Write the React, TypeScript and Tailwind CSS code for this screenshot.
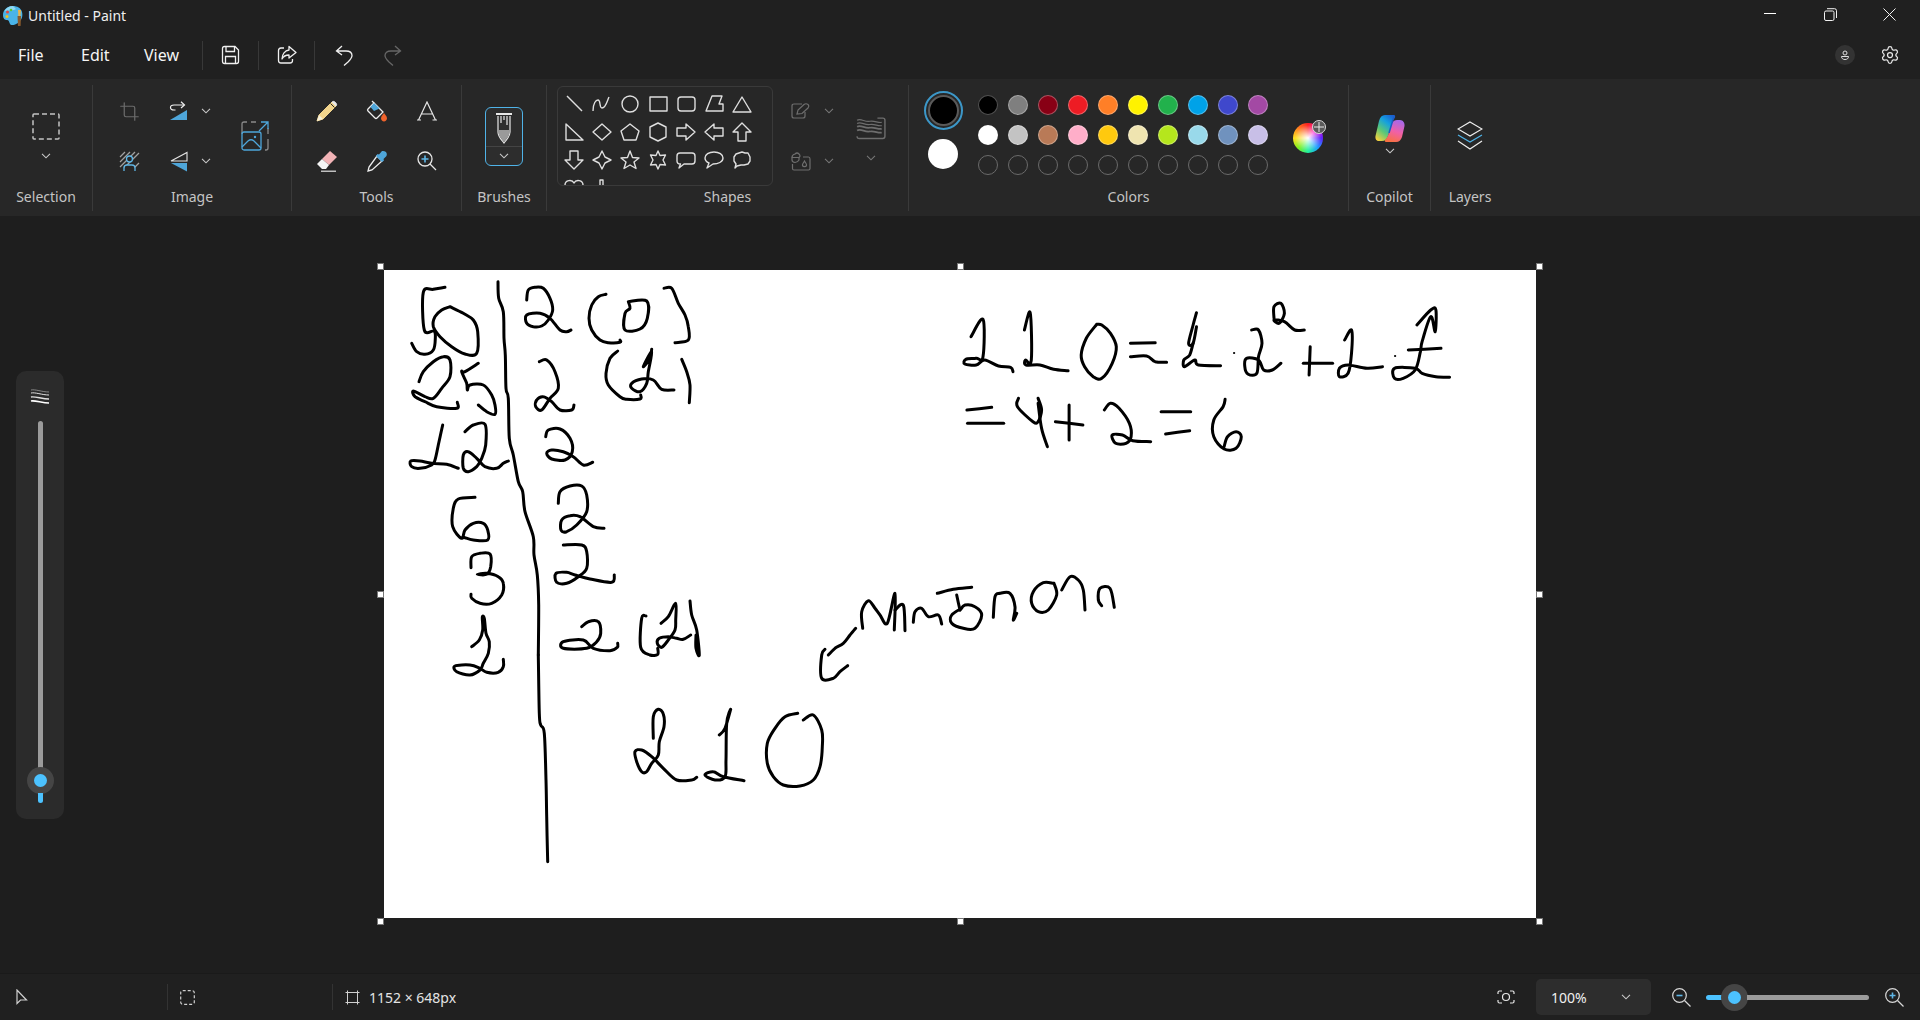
import React from 'react';
import { Settings, Crop } from 'lucide-react';

// hand traced strokes, each list in the coordinates of the crop it was read from
type Trace = { ox: number; oy: number; sx: number; sy: number; lines: string[] };

const traces: Trace[] = [
  {
    ox: 370, oy: 255, sx: 3, sy: 3,
    lines: [
      '384,80 386,130 400,170 402,250 406,300 408,400 415,430 418,550 430,600 445,680 458,710 465,770 490,845 492,900 502,960 506,1050 505,1200',
      '225,97 190,103 160,112 163,225 192,228 196,250 190,285 165,298 140,290 125,265',
      '240,155 215,165 195,185 190,215 210,245 245,275 285,297 320,295 323,230 310,195 280,175 240,155',
      '147,380 160,350 190,320 220,305 240,315 240,365 215,400 190,430 165,425 130,408 135,425 165,440 200,455 260,460 262,442',
      '325,325 285,350 275,350 290,385 292,405 300,390 340,390 365,420 375,450 375,478 350,470 325,450',
      '218,510 205,570 195,615 185,630 150,640 125,635 122,618 150,618 185,625 230,628 265,640',
      '285,530 310,510 345,508 347,570 335,610 320,635 295,650 280,640 280,600 295,590 320,610 345,635 380,640 400,625 415,618',
      '315,727 265,732 250,760 248,815 275,850 285,825 310,805 340,805 353,825 353,855 310,855 285,848',
      '303,938 305,905 330,895 360,897 362,935 350,958 322,958 350,955 385,965 400,985 395,1020 365,1045 330,1045 305,1030 303,1018',
      '470,135 475,105 495,97 520,100 540,130 548,165 535,195 515,213 490,215 470,205 470,180 510,175 540,190 570,225 590,230 603,225',
      '708,118 685,125 665,150 657,190 665,225 690,255 715,263 750,262 750,255',
      '775,140 830,138 832,190 810,222 765,225 765,175 780,160 775,140',
      '882,100 905,100 925,145 945,180 955,215 955,255 915,263',
      '508,320 530,315 555,350 565,400 540,430 515,465 497,455 500,435 520,425 545,440 570,465 605,465 612,450',
      '743,288 720,310 708,355 715,390 750,425 770,433 810,432 812,420',
      '845,283 840,310 820,335 845,290 835,350 830,385 810,410 785,400 785,385 815,372 850,375 875,403 912,405',
      '935,313 950,350 960,390 958,443',
      '527,545 535,525 570,522 600,550 607,590 585,615 545,612 530,595 545,585 580,590 610,605 640,630 668,622',
      '565,745 570,710 600,693 635,693 650,720 650,770 620,810 590,830 573,825 575,795 600,782 630,785 670,815 702,820',
      '580,870 635,870 650,890 650,940 625,965 590,985 560,982 558,955 590,952 615,960 660,972 725,982 733,960',
    ],
  },
  {
    ox: 420, oy: 560, sx: 3, sy: 3,
    lines: [
      '355,285 358,460 362,495 373,520 378,660 380,770 383,905',
      '155,260 178,240 188,210 187,172 193,175 198,220 208,245 205,280 190,310 180,330 150,345 110,335 105,318 150,315 180,325 200,337 235,337 250,320 250,298',
      '485,200 505,185 535,185 542,220 530,245 500,265 430,265 430,245 490,240 520,265 570,272 592,262 593,250',
      '678,168 665,175 662,262 690,285 713,283 713,265',
      '723,190 745,170 767,130 767,180 765,210 745,240 725,262 712,250 718,235 745,230 770,235 790,238 812,225',
      '810,123 815,165 830,210 838,285 828,265 828,225',
      '700,535 700,470 715,448 730,462 732,500 718,545 715,585 695,610 680,635 665,635 650,605 645,575 665,570 695,590 730,625 770,660 815,660 830,652',
      '898,525 915,505 932,448 920,490 918,600 915,650 885,660 855,645 880,635 910,650 972,662',
      '1133,460 1095,470 1065,505 1042,550 1042,610 1060,650 1090,675 1140,678 1180,660 1200,620 1207,560 1205,510 1180,465 1150,480',
    ],
  },
  {
    ox: 800, oy: 560, sx: 3, sy: 3,
    lines: [
      '167,205 150,225 130,250 105,265 85,285',
      '75,268 65,285 65,355 100,355 120,335 143,317',
      '188,205 185,155 205,122 225,145 240,165 262,190 285,100 283,210',
      '285,150 310,135 315,212',
      '340,187 345,155 365,145 385,170 415,165 425,192',
      '412,100 460,88 515,82',
      '470,105 480,150',
      '485,145 455,165 455,190 490,205 525,205 545,165 525,140 495,135 480,150',
      '580,172 585,110 600,100 630,100 645,140 640,180 650,160',
      '760,70 730,68 700,95 695,130 715,155 745,150 770,105 762,70',
      '785,90 810,50 835,60 850,90 855,150',
      '905,137 895,120 900,85 930,85 943,142',
    ],
  },
  {
    ox: 940, oy: 280, sx: 2.904, sy: 3,
    lines: [
      '90,170 125,118 125,230 105,235 75,238 72,252 105,255 130,240 170,258 205,262 212,275',
      '245,150 262,98 265,240 248,240 250,255 290,255 330,268 372,272',
      '455,133 425,175 410,225 420,260 445,290 470,295 500,250 512,200 495,160 470,135 455,133',
      '553,190 625,188',
      '553,230 600,228 625,245 658,247',
      '745,98 735,135 722,190 735,190 745,140',
      '735,190 725,225 708,240 710,260 740,240 750,255 815,257',
      '905,150 925,150 935,190 925,230 920,280 895,283 885,260 890,235 925,240 940,270 965,270 990,250',
      '970,115 970,80 990,70 1000,100 985,130 970,120 1000,125 1030,150 1058,150',
      '1055,250 1140,250',
      '1075,200 1072,285',
      '1175,180 1195,150 1195,220 1185,280 1160,290 1160,265 1185,255 1240,265 1285,260',
      '1385,135 1425,90 1440,90 1438,155 1425,110 1400,185 1395,215 1380,270 1345,295 1320,295 1320,265 1380,265 1400,280 1440,290 1480,292',
      '1360,210 1455,205',
      '78,390 150,382',
      '80,430 185,430',
      '228,355 225,380 270,425 285,425 295,390 285,355',
      '285,370 295,445 312,500',
      '335,425 415,435',
      '375,375 375,480',
      '477,390 495,370 520,385 550,430 555,470 540,490 510,490 500,465 530,465 560,482 612,485',
      '642,395 728,395',
      '655,462 725,452',
      '828,358 822,380 795,420 795,470 825,507 860,505 875,470 860,455 835,470 825,500',
    ],
  },
];

// catmull-rom through the traced points, so the pen strokes come out round
const toPath = (t: Trace, line: string) => {
  const pts = line.split(' ').map((p) => {
    const [x, y] = p.split(',').map(Number);
    return [t.ox - 384 + x / t.sx, t.oy - 270 + y / t.sy];
  });
  let d = `M${pts[0][0].toFixed(1)} ${pts[0][1].toFixed(1)}`;
  for (let i = 0; i < pts.length - 1; i++) {
    const p0 = pts[Math.max(i - 1, 0)];
    const p1 = pts[i];
    const p2 = pts[i + 1];
    const p3 = pts[Math.min(i + 2, pts.length - 1)];
    const c1x = p1[0] + (p2[0] - p0[0]) / 6;
    const c1y = p1[1] + (p2[1] - p0[1]) / 6;
    const c2x = p2[0] - (p3[0] - p1[0]) / 6;
    const c2y = p2[1] - (p3[1] - p1[1]) / 6;
    d += `C${c1x.toFixed(1)} ${c1y.toFixed(1)} ${c2x.toFixed(1)} ${c2y.toFixed(1)} ${p2[0].toFixed(1)} ${p2[1].toFixed(1)}`;
  }
  return d;
};

const topColors = ['#000000', '#7f7f7f', '#880015', '#ed1c24', '#ff7f27', '#fff200', '#22b14c', '#00a2e8', '#3f48cc', '#a349a4'];
const midColors = ['#ffffff', '#c3c3c3', '#b97a57', '#ffaec9', '#ffc90e', '#efe4b0', '#b5e61d', '#99d9ea', '#7092be', '#c8bfe7'];

const Chevron = ({ className = 'text-[#c9c9c9]' }: { className?: string }) => (
  <svg width="10" height="6" viewBox="0 0 10 6" fill="none" stroke="currentColor" strokeWidth="1.1" className={className}>
    <path d="M1 .8 5 4.8 9 .8" />
  </svg>
);

const Sep = () => <div className="w-px h-[29px] bg-[#383838]" />;

const Section = ({ label, width, last, children }: { label: string; width: string; last?: boolean; children: React.ReactNode }) => (
  <div className={`${width} h-[126px] mt-[6px] flex flex-col shrink-0 ${last ? '' : 'border-r border-[#3a3a3a]'}`}>
    <div className="h-[100px] mt-px flex">{children}</div>
    <div className="h-[20px] flex items-center justify-center text-[14px] text-[#c4c4c4]">{label}</div>
  </div>
);

const Cell = ({ className, children }: { className: string; children: React.ReactNode }) => (
  <div className={`${className} flex items-center justify-center`}>{children}</div>
);

// shapes gallery, 20x20 box each
const shapePaths = [
  'M3 2 18 17',
  'M1 17C1 9 4 6 6 6 9 6 7 14 10 14 14 14 15 7 17 3',
  'M18 10A8 8 0 1 1 2 10 8 8 0 1 1 18 10Z',
  'M2 3H19V17H2Z',
  'M5 3H16Q19 3 19 6V14Q19 17 16 17H5Q2 17 2 14V6Q2 3 5 3Z',
  'M8 2H18L15 10H19V17H2Z',
  'M10 3 19 18H1Z',
  'M2 2 19 18H2Z',
  'M10 2 19 10 10 18 1 10Z',
  'M10 2 19 9 16 18H4L1 9Z',
  'M10 1 18 5V15L10 19 2 15V5Z',
  'M1 6H10V2L19 10 10 18V14H1Z',
  'M19 6H10V2L1 10 10 18V14H19Z',
  'M10 1 19 10H14V19H6V10H1Z',
  'M6 1H14V10H19L10 19 1 10H6Z',
  'M10 1 13 7 19 10 13 13 10 19 7 13 1 10 7 7Z',
  'M10 1 12.5 7.5 19 8 14 12 16 18.500 10 15 4 18.500 6 12 1 8 7.500 7.500Z',
  'M10 1 12 5.500 17.500 5 15 10 17.500 15 12 14.500 10 19 8 14.500 2.500 15 5 10 2.500 5 8 5.500Z',
  'M4 3H16Q19 3 19 6V11Q19 14 16 14H8L3 18 4.500 14Q1 14 1 11V6Q1 3 4 3Z',
  'M10 2C15 2 19 4.500 19 8 19 12 14 14 9 14L3 18 5 13C2.500 12 1 10 1 8 1 4.500 5 2 10 2Z',
  'M10 2 13 3 16 3 18 7 18 11 16 14 12 15 9 15 5 16 3 18 4 14 2 11 2 7 4 4Z',
  'M10 5C12 1 19 2 19 7 19 11 14 15 10 18 6 15 1 11 1 7 1 2 8 1 10 5Z',
  'M8 2H11V8L17 10 8 19Z',
];

const ShapeGallery = () => (
  <div className="w-[216px] h-[100px] border border-[#3a3a3a] rounded-[6px] overflow-hidden pl-[2px] pt-[3px]">
    <div className="grid grid-cols-[repeat(7,28px)] auto-rows-[28px]">
      {shapePaths.map((d) => (
        <Cell key={d} className="w-[28px] h-[28px]">
          <svg width="20" height="20" viewBox="0 0 20 20" fill="none" stroke="#dedede" strokeWidth="1.4" strokeLinejoin="round">
            <path d={d} />
          </svg>
        </Cell>
      ))}
    </div>
  </div>
);

const SizeGlyph = ({ size = 30, color = '#6e6e6e' }: { size?: number; color?: string }) => (
  <svg width={size} height={size * 0.75} viewBox="0 0 28 21" fill="none" stroke={color} strokeWidth="1.1">
    <path d="M1 3C5 1 8 5 13 4 17 3 21 6 24 5" />
    <path d="M1 6C5 4 8 8 13 7 17 6 21 9 24 8" />
    <path d="M1 9C5 7 8 11 13 10 17 9 21 12 24 11" strokeWidth="1.6" />
    <path d="M1 12.500C5 10.500 8 14.500 13 13.500 17 12.500 21 15.500 24 14.500" strokeWidth="1.6" />
    <path d="M20 1H25Q27 1 27 3V18Q27 20 25 20H3Q1 20 1 18" strokeWidth="1.3" />
  </svg>
);

export default function App() {
  return (
    <div className="w-[1920px] h-[1020px] overflow-hidden flex flex-col bg-[#1e1e1e] text-white font-['Noto_Sans',sans-serif]">
      {/* title bar */}
      <div className="h-[31px] shrink-0 bg-[#202020] flex items-center relative">
        <svg width="22" height="22" viewBox="0 0 22 22" className="ml-[2px]">
          <path d="M11 1C5 1 1 5 1 10 1 14 3 15 5 15 7 15 7 17 8 19 9 21 13 20 16 18 20 15 21 11 20 7 19 3 15 1 11 1Z" fill="#4ab4e8" />
          <path d="M11 1C7 1 4 3 2.500 6 6 5 12 6 14 4Z" fill="#8fd8f4" />
          <circle cx="5.500" cy="7" r="1.500" fill="#e9483b" />
          <circle cx="5" cy="11.500" r="1.500" fill="#f4c21b" />
          <circle cx="9" cy="5" r="1.300" fill="#5bc236" />
          <path d="M16 5h3l-.6 6h-2z" fill="#e9b44c" />
          <path d="M15.500 11h3.500l-.4 10h-2.600z" fill="#8a5a2b" />
        </svg>
        <span className="ml-[4px] text-[14px] text-[#efefef]">Untitled - Paint</span>
        <div className="ml-auto flex items-center pr-[2px] h-full">
          <Cell className="w-[60px] h-full">
            <div className="w-[12px] h-px bg-white -mt-[4px]" />
          </Cell>
          <Cell className="w-[60px] h-full">
            <svg width="13" height="13" viewBox="0 0 13 13" fill="none" stroke="#f2f2f2" strokeWidth="1" className="-mt-[3px]">
              <rect x=".5" y="3" width="9.500" height="9.500" rx="1.500" />
              <path d="M3 .7H10.500Q12.500 .7 12.500 2.700V10" />
            </svg>
          </Cell>
          <Cell className="w-[58px] h-full">
            <svg width="13" height="13" viewBox="0 0 13 13" fill="none" stroke="#f2f2f2" strokeWidth="1" className="-mt-[3px]">
              <path d="M.5.5 12.500 12.500M12.500.5.5 12.500" />
            </svg>
          </Cell>
        </div>
      </div>

      {/* menu bar */}
      <div className="h-[48px] shrink-0 bg-[#202020] flex items-center">
        <span className="ml-[18px] w-[63px] text-[16px] text-[#f5f5f5]">File</span>
        <span className="w-[63px] text-[16px] text-[#f5f5f5]">Edit</span>
        <span className="w-[58px] text-[16px] text-[#f5f5f5]">View</span>
        <Sep />
        <Cell className="w-[55px] h-[29px]">
          <svg width="19" height="20" viewBox="0 0 19 20" fill="none" stroke="#f0f0f0" strokeWidth="1.3">
            <path d="M3.500 1.500H14L17.500 5V16.500Q17.500 18.500 15.500 18.500H3.500Q1.500 18.500 1.500 16.500V3.500Q1.500 1.500 3.500 1.500Z" />
            <path d="M5 1.500V6.500H13.500V1.500M4.500 18.500V11.500H14.500V18.500" />
          </svg>
        </Cell>
        <Sep />
        <Cell className="w-[55px] h-[29px]">
          <svg width="20" height="20" viewBox="0 0 20 20" fill="none" stroke="#f0f0f0" strokeWidth="1.3" strokeLinejoin="round">
            <path d="M7 3H4Q1.500 3 1.500 5.500V15.500Q1.500 18 4 18H13Q15.500 18 15.500 15.500V14" />
            <path d="M12 1.500 19 7.500 12 13V10C9 10 6.500 11 5 14 5 9 8 5.500 12 5Z" />
          </svg>
        </Cell>
        <Sep />
        <Cell className="w-[58px] h-[29px]">
          <svg width="18" height="21" viewBox="0 0 18 21" fill="none" stroke="#f0f0f0" strokeWidth="1.3">
            <path d="M7 1 1.500 6 7 10M1.500 6H11C15 6 17 8 17 10.500 17 13 15 15 13 17L9 20.500" />
          </svg>
        </Cell>
        <Cell className="w-[40px] h-[29px]">
          <svg width="18" height="21" viewBox="0 0 18 21" fill="none" stroke="#666666" strokeWidth="1.3">
            <path d="M11 1 16.500 6 11 10M16.500 6H7C3 6 1 8 1 10.500 1 13 3 15 5 17L9 20.500" />
          </svg>
        </Cell>
        <div className="ml-auto flex items-center">
          <div className="w-[20px] h-[20px] rounded-full bg-[#333333] flex items-center justify-center">
            <svg width="10" height="10" viewBox="0 0 10 10" fill="none" stroke="#e0e0e0" strokeWidth="1">
              <circle cx="5" cy="3" r="2" />
              <path d="M1.500 6.500H8.500C8.500 8.500 7 9.500 5 9.500 3 9.500 1.500 8.500 1.500 6.500Z" />
            </svg>
          </div>
          <Settings size={20} strokeWidth={1.5} className="ml-[25px] mr-[20px] text-[#e8e8e8]" />
        </div>
      </div>

      {/* ribbon */}
      <div className="h-[137px] shrink-0 bg-[#272727] flex">
        <Section label="Selection" width="w-[93px]">
          <div className="w-[92px] flex flex-col items-center">
            <svg width="28" height="27" viewBox="0 0 28 27" fill="none" stroke="#c4c4c4" strokeWidth="1.500" strokeDasharray="5 3" className="mt-[27px]">
              <rect x="1" y="1" width="26" height="25" rx="1" />
            </svg>
            <div className="mt-[13px]">
              <Chevron />
            </div>
          </div>
        </Section>

        <Section label="Image" width="w-[199px]">
          <div className="pl-[16px] flex">
            <div className="w-[40px] flex flex-col">
              <Cell className="h-[50px]">
                <Crop size={21} strokeWidth={1.4} className="text-[#6c6c6c]" />
              </Cell>
              <Cell className="h-[50px]">
                <svg width="21" height="21" viewBox="0 0 21 21" fill="none">
                  <path d="M1 6 6 1M1 11 11 1M1 16 16 1M5 17 20 2M14 18 20 12" stroke="#a0a0a0" strokeWidth="1.3" />
                  <circle cx="10.500" cy="8" r="3" fill="#272727" stroke="#5fb6e6" strokeWidth="1.300" />
                  <path d="M5 20V17Q5 14 8 14H13Q16 14 16 17V20" fill="#272727" stroke="#5fb6e6" strokeWidth="1.300" />
                </svg>
              </Cell>
            </div>
            <div className="ml-[12px] flex flex-col">
              <div className="h-[50px] flex items-center">
                <Cell className="w-[36px] h-[50px]">
                  <svg width="20" height="20" viewBox="0 0 20 20" fill="none">
                    <path d="M18 9V19H1Z" fill="#4ea6da" />
                    <path d="M15 4H5Q1.500 4 1.500 6.500 1.500 9 5 9H6.500" stroke="#f0f0f0" strokeWidth="1.200" />
                    <path d="M12 .8 15.500 4 12 7" stroke="#f0f0f0" strokeWidth="1.200" />
                  </svg>
                </Cell>
                <Cell className="w-[18px] h-[50px]">
                  <Chevron />
                </Cell>
              </div>
              <div className="h-[50px] flex items-center">
                <Cell className="w-[36px] h-[50px]">
                  <svg width="20" height="21" viewBox="0 0 20 21" fill="none">
                    <path d="M18 1.500V10H2Z" stroke="#e4e4e4" strokeWidth="1.100" />
                    <path d="M18 12V20.500L2 12Z" fill="#4ea6da" />
                  </svg>
                </Cell>
                <Cell className="w-[18px] h-[50px]">
                  <Chevron />
                </Cell>
              </div>
            </div>
            <Cell className="ml-[20px] w-[40px] h-[100px]">
              <svg width="28" height="30" viewBox="0 0 28 30" fill="none">
                <path d="M1 13V3Q1 1 3 1H6M10 1H15" stroke="#8a8a8a" strokeWidth="1.300" />
                <path d="M27 18V27Q27 29 25 29H24M27 7V13" stroke="#8a8a8a" strokeWidth="1.300" />
                <path d="M18 10 27 1M20 1H27V8" stroke="#4ea6da" strokeWidth="1.300" />
                <rect x="1" y="11" width="19" height="18" rx="2" stroke="#4ea6da" strokeWidth="1.300" />
                <path d="M1 26 7 20Q10 17.500 13 20L20 27" stroke="#4ea6da" strokeWidth="1.300" />
                <circle cx="14" cy="16" r="1.200" fill="#4ea6da" />
              </svg>
            </Cell>
          </div>
        </Section>

        <Section label="Tools" width="w-[170px]">
          <div className="pl-[10px] grid grid-cols-[repeat(3,50px)] grid-rows-[repeat(2,50px)]">
            <Cell className="w-[50px] h-[50px]">
              <svg width="22" height="22" viewBox="0 0 22 22" fill="none">
                <path d="M16 2 20 6 7 19 1 21 3 15Z" fill="#f1d48c" stroke="#f1d48c" strokeWidth="1" />
                <path d="M16 2Q17.500 .5 19.500 2.500 21.500 4.500 20 6L16 2Z" fill="#e9e9e9" stroke="#e9e9e9" />
                <path d="M14.500 3.500 18.500 7.500" stroke="#272727" strokeWidth="1" />
                <path d="M3 15 7 19 1 21Z" fill="#f6f0dc" />
              </svg>
            </Cell>
            <Cell className="w-[50px] h-[50px]">
              <svg width="22" height="22" viewBox="0 0 22 22" fill="none">
                <path d="M8 3 17 12 11 18Q10 19 9 18L2 11Q1 10 2 9Z" fill="#272727" stroke="#efefef" strokeWidth="1.300" />
                <path d="M8 3 13.500 8.500 8 11 4.500 7Z" fill="#4ea6da" />
                <path d="M8 3 6 1" stroke="#efefef" strokeWidth="1.300" />
                <path d="M18 13C19 15 21 16 21 18.500 21 20 19.500 21.500 18 21.500 16.500 21.500 15 20 15 18.500 15 16 17 15 18 13Z" fill="#f0632c" />
              </svg>
            </Cell>
            <Cell className="w-[50px] h-[50px]">
              <svg width="20" height="20" viewBox="0 0 20 20" fill="none" stroke="#e6e6e6" strokeWidth="1.200">
                <path d="M1.500 19 10 1 18.500 19M4.500 13H15.500M0 19H4M15.500 19H20" />
              </svg>
            </Cell>
            <Cell className="w-[50px] h-[50px]">
              <svg width="22" height="22" viewBox="0 0 22 22" fill="none">
                <path d="M14 1 21 7 13 15 6 9Z" fill="#f2b3b6" />
                <path d="M6 9 13 15 10 19H6L1 14Z" fill="#f5f5f5" />
                <path d="M5 21.200H20" stroke="#e6e6e6" strokeWidth="1.200" />
              </svg>
            </Cell>
            <Cell className="w-[50px] h-[50px]">
              <svg width="22" height="22" viewBox="0 0 22 22" fill="none">
                <path d="M11 6 16 11 6 20 2 21 3 17Z" stroke="#efefef" strokeWidth="1.300" />
                <path d="M16 1Q18 .5 20 2 21.500 4 20.500 6L17.500 9 18 10.500 16 12 10 6 11.500 4 13 4.500Z" fill="#4ea6da" />
              </svg>
            </Cell>
            <Cell className="w-[50px] h-[50px]">
              <svg width="20" height="20" viewBox="0 0 20 20" fill="none">
                <circle cx="8" cy="8" r="7" stroke="#e6e6e6" strokeWidth="1.300" />
                <path d="M13 13 19 19" stroke="#e6e6e6" strokeWidth="1.300" />
                <path d="M4.500 8H11.500M8 4.500V11.500" stroke="#5fb6e6" strokeWidth="1.600" />
              </svg>
            </Cell>
          </div>
        </Section>

        <Section label="Brushes" width="w-[85px]">
          <div className="w-[84px] flex items-center justify-center">
            <div className="w-[38px] h-[59px] rounded-[6px] border border-[#4fb3e8] bg-[#2d2d2d] flex flex-col items-center">
              <svg width="18" height="32" viewBox="0 0 18 32" fill="none" className="mt-[4px]">
                <path d="M1 2H17" stroke="#e8e8e8" strokeWidth="2" />
                <path d="M3 4V20C3 25 7 28 9 31 11 28 15 25 15 20V4" stroke="#e8e8e8" strokeWidth="1.200" />
                <path d="M3.500 18H14.500V20C14.500 25 11 27 9 30 7 27 3.500 25 3.500 20Z" fill="#9a9a9a" />
                <path d="M6 4V11M9 4V8M12 4V13" stroke="#e8e8e8" strokeWidth="1.200" />
              </svg>
              <div className="w-full h-px bg-[#444444] mt-[2px]" />
              <div className="flex-1 flex items-center justify-center">
                <Chevron />
              </div>
            </div>
          </div>
        </Section>

        <Section label="Shapes" width="w-[362px]">
          <div className="pl-[10px] flex">
            <ShapeGallery />
            <div className="ml-[10px] flex flex-col">
              <div className="h-[50px] flex items-center">
                <Cell className="w-[36px] h-[50px]">
                  <svg width="20" height="16" viewBox="0 0 20 16" fill="none" stroke="#6e6e6e" strokeWidth="1.200">
                    <path d="M11 1H3Q1 1 1 3V13Q1 15 3 15H12Q14 15 14 13V9" />
                    <path d="M6 11 7 7 13 1.500Q15 0 17 1.500 18.500 3 17 5L11 10.500Z" />
                  </svg>
                </Cell>
                <Cell className="w-[20px] h-[50px]">
                  <Chevron className="text-[#777777]" />
                </Cell>
              </div>
              <div className="h-[50px] flex items-center">
                <Cell className="w-[36px] h-[50px]">
                  <svg width="20" height="19" viewBox="0 0 20 19" fill="none" stroke="#6e6e6e" strokeWidth="1.200">
                    <path d="M4 2Q6 0 8 2 10 4 8 5.500H1C1 3.500 2 2.500 4 2Z" />
                    <path d="M1 5.500V8Q1 10 4 10.500 7 10 8 8V5.500M12 5H17.500Q19 5 19 7V16.500Q19 18 17.500 18H3Q1.500 18 1.500 16.500V12" />
                    <path d="M13.500 9C14.500 11 16 12 15.500 13.500 15 15 12 15 11.500 13.500 11 12 12.500 11 13.500 9Z" />
                  </svg>
                </Cell>
                <Cell className="w-[20px] h-[50px]">
                  <Chevron className="text-[#777777]" />
                </Cell>
              </div>
            </div>
            <div className="ml-[15px] w-[34px] flex flex-col items-center">
              <div className="mt-[31px]">
                <SizeGlyph />
              </div>
              <div className="mt-[15px]">
                <Chevron className="text-[#777777]" />
              </div>
            </div>
          </div>
        </Section>

        <Section label="Colors" width="w-[440px]">
          <div className="pl-[14px] flex">
            <div className="w-[40px] flex flex-col items-center pt-[5px]">
              <div className="w-[39px] h-[39px] rounded-full border-2 border-[#3c97c8] flex items-center justify-center">
                <div className="w-[31px] h-[31px] rounded-full bg-black border-2 border-[#5a5a5a]" />
              </div>
              <div className="mt-[9px] w-[30px] h-[30px] rounded-full bg-white" />
            </div>
            <div className="ml-[10px] pt-[4px] grid grid-cols-[repeat(10,30px)] grid-rows-[repeat(3,30px)]">
              {[...topColors, ...midColors].map((c, i) => (
                <Cell key={i} className="w-[30px] h-[30px]">
                  <div className="w-[20px] h-[20px] rounded-full border border-[#ffffff50]" style={{ backgroundColor: c }} />
                </Cell>
              ))}
              {topColors.map((c) => (
                <Cell key={c} className="w-[30px] h-[30px]">
                  <div className="w-[20px] h-[20px] rounded-full border border-[#6a6a6a]" />
                </Cell>
              ))}
            </div>
            <div className="relative ml-[20px] mt-[37px] w-[30px] h-[30px] rounded-full bg-[radial-gradient(circle,#ffffff_0%,#ffffff00_62%),conic-gradient(#ff2020,#ff20d0,#6020ff,#20a0ff,#20f0a0,#80f020,#ffe020,#ff8020,#ff2020)]">
              <div className="absolute -top-[3px] -right-[3px] w-[14px] h-[14px] rounded-full bg-[#5a5a5a] border border-[#d8d8d8] flex items-center justify-center">
                <svg width="10" height="10" viewBox="0 0 10 10" stroke="#e8e8e8" strokeWidth="1">
                  <path d="M5 0V10M0 5H10" />
                </svg>
              </div>
            </div>
          </div>
        </Section>

        <Section label="Copilot" width="w-[82px]">
          <div className="w-[81px] flex flex-col items-center pt-[28px]">
            <svg width="30" height="29" viewBox="0 0 30 29">
              <defs>
                <linearGradient id="copA" x1="0.8" y1="0" x2="0.2" y2="1">
                  <stop offset="0" stopColor="#1a5fd0" />
                  <stop offset="0.3" stopColor="#14a0e0" />
                  <stop offset="0.65" stopColor="#5ac878" />
                  <stop offset="1" stopColor="#f0d040" />
                </linearGradient>
                <linearGradient id="copB" x1="0.6" y1="0" x2="0.3" y2="1">
                  <stop offset="0" stopColor="#a868e8" />
                  <stop offset="0.5" stopColor="#f060a8" />
                  <stop offset="1" stopColor="#f87040" />
                </linearGradient>
              </defs>
              <path d="M10 1H19C20 1 20.500 2 20 3 18 5 17.500 7 17 9L13 22C12 25 10 27 7 27H4C1.500 27 0 25 .5 22L4 7C5 3 7 1 10 1Z" fill="url(#copA)" />
              <path d="M22 6H25C28 6 30 9 29.500 12L27 23C26 26 24 28 21 28H11C10 28 9.500 27 10 26 12 24 13 22 13.500 20L17 9C18 7 20 6 22 6Z" fill="url(#copB)" />
              <path d="M19.500 2.500C18 5 17.500 7 17 9L14 19" fill="none" stroke="#1c5cc4" strokeWidth="1.500" />
            </svg>
            <div className="mt-[5px]">
              <Chevron />
            </div>
          </div>
        </Section>

        <Section label="Layers" width="w-[78px]" last>
          <div className="w-[78px] flex items-center justify-center">
            <svg width="26" height="30" viewBox="0 0 26 30" fill="none" strokeWidth="1.200">
              <path d="M13 1 25 8 13 15 1 8Z" stroke="#efefef" />
              <path d="M1 14 13 21 25 14" stroke="#4fb3e8" />
              <path d="M1 20 13 28 25 20" stroke="#efefef" />
            </svg>
          </div>
        </Section>
      </div>

      {/* canvas area */}
      <div className="flex-1 flex items-start bg-[#1e1e1e]">
        <div className="mt-[155px] ml-4 w-12 h-[448px] rounded-[10px] bg-[#2b2b2b] flex flex-col items-center shrink-0">
          <div className="mt-[18px]">
            <svg width="20" height="15" viewBox="0 0 20 15" fill="none" stroke="#e0e0e0">
              <path d="M1 1C5 0 12 3 19 3" strokeWidth=".8" stroke="#9a9a9a" />
              <path d="M1 4C5 3 12 6 19 6" strokeWidth="1" />
              <path d="M1 8C5 7 12 10 19 10" strokeWidth="1.300" />
              <path d="M1 12C5 11 12 14 19 14" strokeWidth="1.700" stroke="#ffffff" />
            </svg>
          </div>
          <div className="mt-[17px] w-[5px] h-[347px] rounded-t-full bg-[#9b9b9b]" />
          <div className="w-[27px] h-[27px] rounded-full bg-[#454545] flex items-center justify-center -mt-[1px]">
            <div className="w-[13px] h-[13px] rounded-full bg-[#4cc2ff]" />
          </div>
          <div className="mt-[-1px] w-[5px] h-[10px] rounded-b-full bg-[#4cc2ff]" />
        </div>

        <div className="mt-[54px] ml-[320px] relative w-[1152px] h-[648px] bg-white shrink-0">
          <svg viewBox="0 0 1152 648" className="block w-full h-full" fill="none" stroke="#000000" strokeWidth="3" strokeLinejoin="round" strokeLinecap="round">
            {traces.map((t, i) =>
              t.lines.map((line, j) => <path key={`${i}-${j}`} d={toPath(t, line)} />)
            )}
            <circle cx="850" cy="83" r=".6" fill="#000000" strokeWidth="1" />
            <circle cx="1011" cy="86" r=".6" fill="#000000" strokeWidth="1" />
          </svg>
          <div className="absolute -left-[7px] -top-[7px] w-[7px] h-[7px] bg-white border border-[#777777]" />
          <div className="absolute left-[573px] -top-[7px] w-[7px] h-[7px] bg-white border border-[#777777]" />
          <div className="absolute -right-[7px] -top-[7px] w-[7px] h-[7px] bg-white border border-[#777777]" />
          <div className="absolute -left-[7px] top-[321px] w-[7px] h-[7px] bg-white border border-[#777777]" />
          <div className="absolute -right-[7px] top-[321px] w-[7px] h-[7px] bg-white border border-[#777777]" />
          <div className="absolute -left-[7px] -bottom-[7px] w-[7px] h-[7px] bg-white border border-[#777777]" />
          <div className="absolute left-[573px] -bottom-[7px] w-[7px] h-[7px] bg-white border border-[#777777]" />
          <div className="absolute -right-[7px] -bottom-[7px] w-[7px] h-[7px] bg-white border border-[#777777]" />
        </div>
      </div>

      {/* status bar */}
      <div className="h-[47px] shrink-0 bg-[#202020] border-t border-[#1a1a1a] flex items-center text-[14px] text-[#e4e4e4]">
        <div className="w-[168px] h-[26px] border-r border-[#333333] pl-[16px] flex items-center">
          <svg width="12" height="16" viewBox="0 0 12 16" fill="none" stroke="#d0d0d0" strokeWidth="1.200">
            <path d="M1 1V14.500L4.500 11H10.500Z" />
          </svg>
        </div>
        <div className="w-[165px] h-[26px] border-r border-[#333333] pl-[12px] flex items-center">
          <svg width="15" height="15" viewBox="0 0 15 15" fill="none" stroke="#d0d0d0" strokeWidth="1.200" strokeDasharray="3 2">
            <rect x=".7" y=".7" width="13.600" height="13.600" rx="2" />
          </svg>
        </div>
        <svg width="15" height="15" viewBox="0 0 15 15" fill="none" stroke="#d0d0d0" strokeWidth="1" className="ml-[12px]">
          <path d="M2.500.5V14.500M12.500.5V14.500M.5 2.500H14.500M.5 12.500H14.500" />
        </svg>
        <span className="ml-[9px]">1152 × 648px</span>

        <div className="ml-auto flex items-center">
          <svg width="18" height="14" viewBox="0 0 18 14" fill="none" stroke="#e8e8e8" strokeWidth="1.200">
            <path d="M1 4V2.500Q1 1 2.500 1H5M13 1H15.500Q17 1 17 2.500V4M17 10V11.500Q17 13 15.500 13H13M5 13H2.500Q1 13 1 11.500V10" />
            <circle cx="9" cy="7" r="3.500" />
          </svg>
          <div className="ml-[21px] w-[115px] h-[36px] rounded-[5px] bg-[#2d2d2d] flex items-center pl-[15px] pr-[20px] justify-between text-[#f0f0f0]">
            <span>100%</span>
            <Chevron />
          </div>
          <svg width="19" height="19" viewBox="0 0 19 19" fill="none" className="ml-[21px]">
            <circle cx="7.500" cy="7.500" r="6.800" stroke="#d8d8d8" strokeWidth="1.200" />
            <path d="M12.500 12.500 18.500 18.500" stroke="#d8d8d8" strokeWidth="1.200" />
            <path d="M4.500 7.500H10.500" stroke="#5fb6e6" strokeWidth="1.600" />
          </svg>
          <div className="ml-[15px] flex items-center">
            <div className="w-[16px] h-[5px] rounded-l-full bg-[#4cc2ff]" />
            <div className="w-[27px] h-[27px] rounded-full bg-[#454545] flex items-center justify-center -ml-[1px]">
              <div className="w-[13px] h-[13px] rounded-full bg-[#4cc2ff]" />
            </div>
            <div className="w-[122px] h-[5px] rounded-r-full bg-[#9b9b9b] -ml-[1px]" />
          </div>
          <svg width="19" height="19" viewBox="0 0 19 19" fill="none" className="ml-[16px] mr-[16px]">
            <circle cx="7.500" cy="7.500" r="6.800" stroke="#d8d8d8" strokeWidth="1.200" />
            <path d="M12.500 12.500 18.500 18.500" stroke="#d8d8d8" strokeWidth="1.200" />
            <path d="M4.500 7.500H10.500M7.500 4.500V10.500" stroke="#5fb6e6" strokeWidth="1.600" />
          </svg>
        </div>
      </div>
    </div>
  );
}
